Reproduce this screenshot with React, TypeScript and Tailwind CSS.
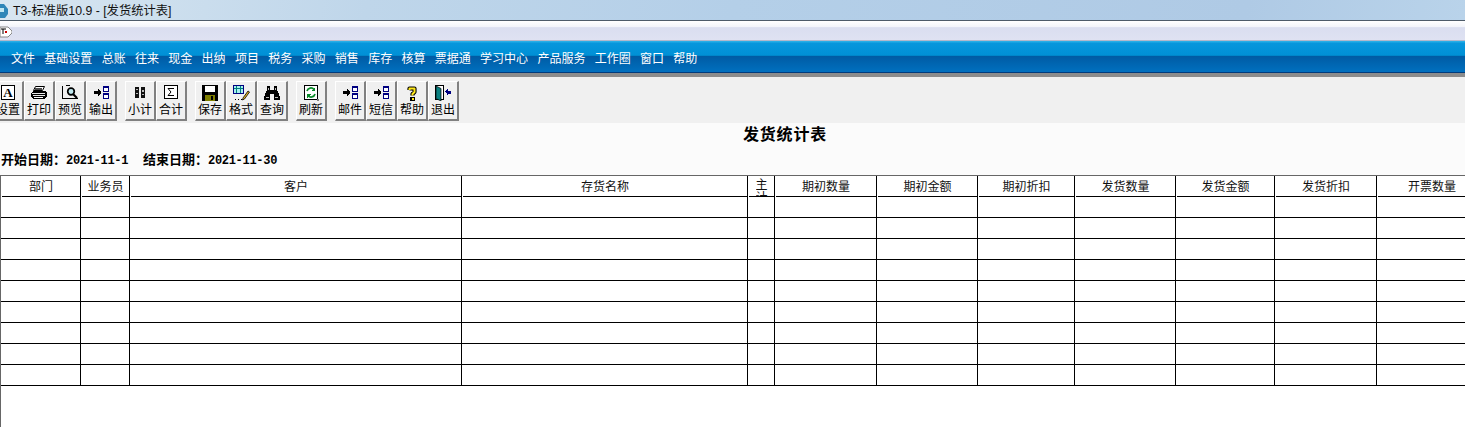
import type { ReactNode } from "react";

const Svg = ({ children }: { children: ReactNode }) => (
  <svg width="18" height="16" viewBox="0 0 18 16" shapeRendering="crispEdges" aria-hidden="true">
    {children}
  </svg>
);

const PageA = () => (
  <Svg>
    <path d="M2.5 .5h13v14h-13z" fill="#fff" stroke="#000" />
    <text x="9" y="12" textAnchor="middle" fontFamily="Liberation Serif" fontWeight="700" fontSize="13" fill="#000">A</text>
  </Svg>
);

const Printer = () => (
  <Svg>
    <path d="M5.500 1.500h9l-2 4h-9z" fill="#fff" stroke="#000" shapeRendering="auto" />
    <path d="M5 3h7M4.500 4.500h7" stroke="#000" strokeWidth=".7" />
    <path d="M3 6h13l1 2v3l-2 3H3l-2-2V8z" fill="#000" />
    <path d="M2 8h13v1H2zM3 10h12v1H3z" fill="#e8e8e8" />
    <path d="M4 12h9v1H4z" fill="#fff" />
  </Svg>
);

const Preview = () => (
  <Svg>
    <path d="M1.500 .5v13h15" fill="none" stroke="#000" />
    <path d="M5 .5h4" stroke="#000" />
    <circle cx="10" cy="6.500" r="3.300" fill="#bfe8ef" stroke="#000" strokeWidth="1.700" shapeRendering="auto" />
    <path d="M12 9l4 4" stroke="#000" strokeWidth="2.200" shapeRendering="auto" />
  </Svg>
);

const Output = () => (
  <Svg>
    <path d="M2 6h4v3H2zM6 4h1v7H6zM7 5h1v5H7zM8 6h1v3H8z" fill="#000" />
    <path d="M11.500 1.500h5v5h-5zM11.500 8.500h5v5h-5z" fill="#fff" stroke="#000080" />
    <path d="M11 1h6v2h-6zM11 8h6v2h-6z" fill="#000080" />
  </Svg>
);

const Subtotal = () => (
  <Svg>
    <path d="M4 2h4v11H4zM10 2h4v11h-4z" fill="#111" />
    <path d="M5 4h2v1H5zM5 8h2v1H5zM11 5h2v2h-2zM11 9h2v1h-2z" fill="#bbb" />
  </Svg>
);

const Sigma = () => (
  <Svg>
    <path d="M2.500 .5h13v13h-13z" fill="#fff" stroke="#000" />
    <path d="M6 3.500h6M6 10.500h6M6 3.500l3 3.500l-3 3.500" fill="none" stroke="#000" shapeRendering="auto" />
  </Svg>
);

const Floppy = () => (
  <Svg>
    <path d="M1 0h15l1 1v15H1z" fill="#000" />
    <path d="M4 1h10v6H4z" fill="#fff" />
    <path d="M4 10h10v6H4z" fill="#808000" />
    <path d="M10 11h2v4h-2z" fill="#000" />
  </Svg>
);

const Format = () => (
  <Svg>
    <path d="M1.500 .5h10v8h-10z" fill="#a8f0f0" stroke="#000080" />
    <path d="M2 3h9M4 1v7M8 1v7" stroke="#008080" />
    <path d="M3 14h1v1H3zM6 14h1v1H6zM9 14h1v1H9z" fill="#000" />
    <path d="M11 13l5-7l1.500 1l-5 7l-2 1z" fill="#e0b020" stroke="#000" strokeWidth=".8" shapeRendering="auto" />
  </Svg>
);

const Binoculars = () => (
  <Svg>
    <path d="M4 1h3v4h4V1h3v4l1 2l2 5v3h-6V9H7v6H1v-3l2-5l1-2z" fill="#000" />
    <path d="M3 12h3v1H3zM12 12h3v1h-3zM5 3h1v2H5zM12 3h1v2h-1z" fill="#bbb" />
  </Svg>
);

const Refresh = () => (
  <Svg>
    <path d="M2.500 .5h13v14h-13z" fill="#fff" stroke="#000" />
    <path d="M5 6a4 4 0 0 1 7-1.500M13 9a4 4 0 0 1-7 1.500" fill="none" stroke="#0a8a2a" strokeWidth="1.700" shapeRendering="auto" />
    <path d="M13 2v4H9zM5 13V9h4z" fill="#0a8a2a" />
    <path d="M15 14h2v2h-2z" fill="#808080" />
  </Svg>
);

const Help = () => (
  <Svg>
    <path d="M6.500 5V3.500h5V7l-2 2v1.500" fill="none" stroke="#000" strokeWidth="4.200" strokeLinejoin="round" shapeRendering="auto" />
    <path d="M6.500 5V3.500h5V7l-2 2v1.500" fill="none" stroke="#ffe81a" strokeWidth="2" strokeLinejoin="round" shapeRendering="auto" />
    <path d="M7 12h5v4H7z" fill="#000" />
    <path d="M8.500 13h2v2h-2z" fill="#ffe81a" />
  </Svg>
);

const Exit = () => (
  <Svg>
    <path d="M1.500 .5h8v14h-8z" fill="#fff" stroke="#000" />
    <path d="M2 1l5 2.500V16l-5-2.500z" fill="#0a8080" stroke="#000" strokeWidth=".7" shapeRendering="auto" />
    <path d="M11 6.500l3-3v2h3v3h-3v2z" fill="#000080" />
  </Svg>
);

const groups: { label: string; icon: ReactNode }[][] = [
  [
    { label: "设置", icon: <PageA /> },
    { label: "打印", icon: <Printer /> },
    { label: "预览", icon: <Preview /> },
    { label: "输出", icon: <Output /> },
  ],
  [
    { label: "小计", icon: <Subtotal /> },
    { label: "合计", icon: <Sigma /> },
  ],
  [
    { label: "保存", icon: <Floppy /> },
    { label: "格式", icon: <Format /> },
    { label: "查询", icon: <Binoculars /> },
  ],
  [{ label: "刷新", icon: <Refresh /> }],
  [
    { label: "邮件", icon: <Output /> },
    { label: "短信", icon: <Output /> },
    { label: "帮助", icon: <Help /> },
    { label: "退出", icon: <Exit /> },
  ],
];

const menus = ["文件", "基础设置", "总账", "往来", "现金", "出纳", "项目", "税务", "采购", "销售", "库存", "核算", "票据通", "学习中心", "产品服务", "工作圈", "窗口", "帮助"];

const columns = [
  { label: "部门", w: "w-[80px]" },
  { label: "业务员", w: "w-[49px]" },
  { label: "客户", w: "w-[332px]" },
  { label: "存货名称", w: "w-[286px]" },
  { label: "主计量", w: "w-[27px]" },
  { label: "期初数量", w: "w-[102px]" },
  { label: "期初金额", w: "w-[101px]" },
  { label: "期初折扣", w: "w-[97px]" },
  { label: "发货数量", w: "w-[101px]" },
  { label: "发货金额", w: "w-[99px]" },
  { label: "发货折扣", w: "w-[102px]" },
  { label: "开票数量", w: "w-[110px]" },
];

const rows = Array.from({ length: 9 }, (_, i) => i);

export default function App() {
  return (
    <div className="w-[1465px] h-[427px] overflow-hidden bg-white font-['Liberation_Sans','Noto_Sans_CJK_SC',sans-serif] text-[12px] text-black">
      {/* Title bar */}
      <div className="h-[20px] flex items-center bg-[linear-gradient(100deg,#d8e6f1_0%,#bfd6ea_25%,#b4cfe8_50%,#afcae5_85%,#b9d3ea_100%)]">
        <svg width="9" height="14" viewBox="0 0 9 14" className="mt-[2px]" aria-hidden="true">
          <path d="M0 0h4l4 5v5l-3 4H0z" fill="#2f86b8" />
          <path d="M0 4h4v4H0z" fill="#bfe6f2" />
        </svg>
        <span className="ml-[4px] mt-[2px] text-[12.3px] text-[#111]">T3-标准版10.9 - [发货统计表]</span>
      </div>

      {/* Menu strip */}
      <div className="h-[21px] flex items-center border-t border-t-[#4d5b69] border-b border-b-[#b2b8cc] bg-[linear-gradient(#ffffff_0%,#f2f4fa_30%,#dadef0_35%,#dfe2f2_100%)]">
        <svg width="12" height="12" viewBox="0 0 12 12" className="mt-[2px]" aria-hidden="true">
          <path d="M0 1h8l4 4v2l-4 4H0z" fill="#fff" stroke="#888" />
          <path d="M1 3h5M3 3v5" stroke="#000" />
          <path d="M5 5h2v2H5z" fill="#c00" />
        </svg>
      </div>

      {/* Blue menu bar */}
      <div className="h-[32px] flex items-center gap-[9.3px] pl-[11px] pt-[5px] border-b border-b-[#003b7c] text-white text-[12px] bg-[linear-gradient(#2fb4ea_0%,#0796dc_8%,#0090d6_45%,#0085c8_47%,#005ba4_49%,#0070bf_100%)]">
        {menus.map((m, i) => (
          <span key={i}>{m}</span>
        ))}
      </div>

      {/* Toolbar */}
      <div className="h-[50px] flex items-start gap-[8px] pt-[4px] border-t-[4px] border-t-[#8c8c8c] bg-[#f0f0f0]">
        {groups.map((group, gi) => (
          <div key={gi} className={gi === 0 ? "flex -ml-[7px]" : "flex"}>
            {group.map((b) => (
              <div
                key={b.label}
                className="w-[31px] h-[40px] flex flex-col items-center pt-[3px] bg-[#f0f0f0] border-t border-l border-t-white border-l-white border-r-2 border-b-2 border-r-[#808080] border-b-[#808080]"
              >
                {b.icon}
                <span className="leading-[16px] font-['Noto_Sans_CJK_SC',sans-serif] text-[12px] whitespace-nowrap">{b.label}</span>
              </div>
            ))}
          </div>
        ))}
      </div>

      {/* Report heading */}
      <div className="h-[52px] bg-[#fbfbfb]">
        <div className="pl-[743px] h-[25px] flex items-start leading-[20px] font-bold text-[16px] tracking-[0.8px] font-['Noto_Sans_CJK_SC',sans-serif]">
          发货统计表
        </div>
        <div className="pl-[1px] flex items-center h-[22px] font-bold text-[13px] font-['Noto_Sans_CJK_SC',sans-serif]">
          <span className="w-[142px] whitespace-nowrap">
            开始日期：<span className="font-['Liberation_Mono',monospace] text-[12px] tracking-[-0.3px]">2021-11-1</span>
          </span>
          <span className="whitespace-nowrap">
            结束日期：<span className="font-['Liberation_Mono',monospace] text-[12px] tracking-[-0.3px]">2021-11-30</span>
          </span>
        </div>
      </div>

      {/* Table */}
      <div className="border-t border-t-[#666] border-l border-l-[#666] h-[252px] bg-white">
        <div className="flex h-[21px]">
          {columns.map((c) => (
            <div key={c.label} className={`${c.w} shrink-0 h-[21px] border-r border-r-black pl-[1px]`}>
              <div className="h-[21px] border-b border-b-black flex justify-center overflow-hidden font-['Noto_Sans_CJK_SC',sans-serif] text-[#111]">
                {c.label === "主计量" ? (
                  <span className="w-[12px] leading-[13px] mt-[1px] h-[19px] overflow-hidden">{c.label}</span>
                ) : (
                  <span className="leading-[19px]">{c.label}</span>
                )}
              </div>
            </div>
          ))}
        </div>
        {rows.map((r) => (
          <div key={r} className="flex h-[21px] border-b border-b-black">
            {columns.map((c) => (
              <div key={c.label} className={`${c.w} shrink-0 border-r border-r-black`} />
            ))}
          </div>
        ))}
      </div>
    </div>
  );
}
